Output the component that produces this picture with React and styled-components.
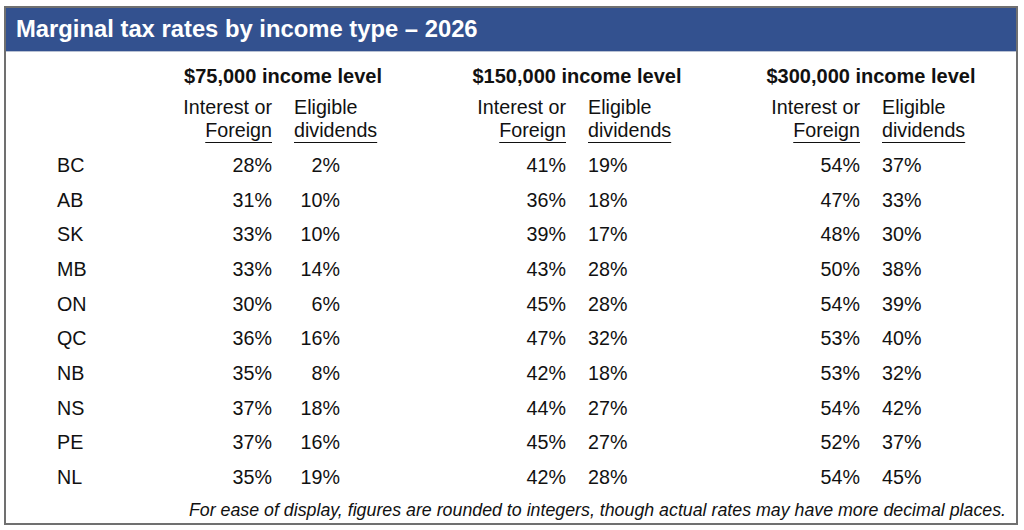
import styled, { createGlobalStyle } from 'styled-components';

const GlobalStyle = createGlobalStyle`
	html, body {
		margin: 0;
		padding: 0;
		background: #fff;
	}
	body {
		font-family: 'Liberation Sans', Arial, Helvetica, sans-serif;
		color: #111;
	}
`;

const Card = styled.div`
	box-sizing: border-box;
	margin: 6px 0 0 4px;
	width: 1014px;
	height: 519px;
	border: 2px solid #707070;
	background: #fff;
	display: flex;
	flex-direction: column;
`;

const Band = styled.div`
	height: 43px;
	background: #33518f;
	border-bottom: 1px solid #b8c1d3;
	padding-left: 10px;
	color: #fff;
	font-weight: bold;
	font-size: 23.8px;
	line-height: 41px;
`;

const Body = styled.div`
	display: flex;
	flex-direction: column;
	padding: 13px 10px 0 51px;
	font-size: 19.7px;
`;

const Line = styled.div`
	display: grid;
	grid-template-columns: 53px repeat(3, 242px);
	column-gap: 52px;
	line-height: ${(p) => p.$height || '22px'};
	margin-top: ${(p) => p.$gap || '0'};
`;

const GroupTitle = styled.div`
	font-weight: bold;
	font-size: 20px;
	text-align: center;
	white-space: nowrap;
`;

const Pair = styled.div`
	display: grid;
	grid-template-columns: 110px 110px;
	column-gap: 22px;
`;

const SubHead = styled.div`
	text-align: ${(p) => (p.$right ? 'right' : 'left')};
	white-space: nowrap;
`;

const Under = styled.span`
	text-decoration: underline;
	text-underline-offset: 5px;
	text-decoration-thickness: 1px;
`;

const Label = styled.div`
	white-space: nowrap;
`;

const Rate = styled.div`
	text-align: right;
`;

const Dividend = styled.div`
	width: ${(p) => p.$width}px;
	text-align: right;
`;

const Note = styled.div`
	margin-top: 5px;
	font-size: 17.8px;
	font-style: italic;
	line-height: 20px;
	text-align: right;
	white-space: nowrap;
`;

const groups = ['$75,000', '$150,000', '$300,000'];

const rows = [
	['BC', 28, 2, 41, 19, 54, 37],
	['AB', 31, 10, 36, 18, 47, 33],
	['SK', 33, 10, 39, 17, 48, 30],
	['MB', 33, 14, 43, 28, 50, 38],
	['ON', 30, 6, 45, 28, 54, 39],
	['QC', 36, 16, 47, 32, 53, 40],
	['NB', 35, 8, 42, 18, 53, 32],
	['NS', 37, 18, 44, 27, 54, 42],
	['PE', 37, 16, 45, 27, 52, 37],
	['NL', 35, 19, 42, 28, 54, 45]
];

// first group's dividends sit on a wider tab stop than the other two
const divWidth = [46, 39, 39];

const App = () => {
	return (
		<>
			<GlobalStyle />
			<Card>
				<Band>Marginal tax rates by income type – 2026</Band>
				<Body>
					<Line>
						<div />
						{groups.map((g) => (
							<GroupTitle key={g}>{g} income level</GroupTitle>
						))}
					</Line>
					<Line $gap="9px" $height="23px">
						<div />
						{groups.map((g) => (
							<Pair key={g}>
								<SubHead $right>
									Interest or
									<br />
									<Under>Foreign</Under>
								</SubHead>
								<SubHead>
									Eligible
									<br />
									<Under>dividends</Under>
								</SubHead>
							</Pair>
						))}
					</Line>
					{rows.map((r, i) => (
						<Line key={r[0]} $height="34.67px" $gap={i === 0 ? '6px' : '0'}>
							<Label>{r[0]}</Label>
							{[0, 1, 2].map((g) => (
								<Pair key={g}>
									<Rate>{r[1 + g * 2]}%</Rate>
									<Dividend $width={divWidth[g]}>{r[2 + g * 2]}%</Dividend>
								</Pair>
							))}
						</Line>
					))}
					<Note>
						For ease of display, figures are rounded to integers, though actual
						rates may have more decimal places.
					</Note>
				</Body>
			</Card>
		</>
	);
};

export default App;
